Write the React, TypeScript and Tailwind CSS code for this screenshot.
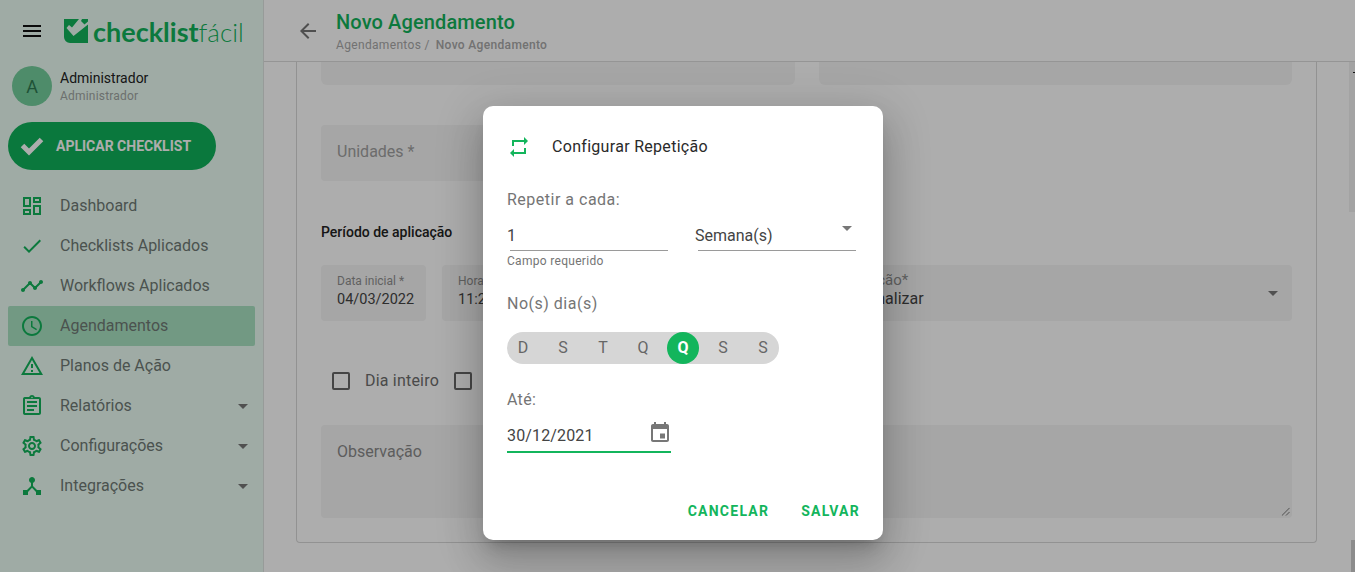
const P = {
  menu: "M3 18h18v-2H3v2zm0-5h18v-2H3v2zm0-7v2h18V6H3z",
  back: "M20 11H7.83l5.59-5.59L12 4l-8 8 8 8 1.41-1.41L7.83 13H20v-2z",
  dashboard: "M19 5v2h-4V5h4M9 5v6H5V5h4m10 8v6h-4v-6h4M9 17v2H5v-2h4M21 3h-8v6h8V3zM11 3H3v10h8V3zm10 8h-8v10h8V11zm-10 4H3v6h8v-6z",
  check: "M9 16.17L4.83 12l-1.42 1.41L9 19 21 7l-1.41-1.41z",
  timeline: "M23 8c0 1.1-.9 2-2 2-.18 0-.35-.02-.51-.07l-3.56 3.55c.05.16.07.34.07.52 0 1.1-.9 2-2 2s-2-.9-2-2c0-.18.02-.36.07-.52l-2.55-2.55c-.16.05-.34.07-.52.07s-.36-.02-.52-.07l-4.55 4.56c.05.16.07.33.07.51 0 1.1-.9 2-2 2s-2-.9-2-2 .9-2 2-2c.18 0 .35.02.51.07l4.56-4.55C8.02 9.36 8 9.18 8 9c0-1.1.9-2 2-2s2 .9 2 2c0 .18-.02.36-.07.52l2.55 2.55c.16-.05.34-.07.52-.07s.36.02.52.07l3.55-3.56C19.02 8.35 19 8.18 19 8c0-1.1.9-2 2-2s2 .9 2 2z",
  schedule: "M11.99 2C6.47 2 2 6.48 2 12s4.47 10 9.99 10C17.52 22 22 17.52 22 12S17.52 2 11.99 2zM12 20c-4.42 0-8-3.58-8-8s3.58-8 8-8 8 3.58 8 8-3.58 8-8 8zm.5-13H11v6l5.25 3.15.75-1.23-4.5-2.67z",
  warning: "M12 5.99L19.53 19H4.47L12 5.99M12 2L1 21h22L12 2zm1 14h-2v2h2v-2zm0-6h-2v4h2v-4z",
  assignment: "M7 15h7v2H7zm0-4h10v2H7zm0-4h10v2H7zm12-4h-4.18C14.4 1.84 13.3 1 12 1c-1.3 0-2.4.84-2.82 2H5c-.14 0-.27.01-.4.04-.39.08-.74.28-1.01.55-.18.18-.33.4-.43.64-.1.23-.16.49-.16.77v14c0 .27.06.54.16.78s.25.45.43.64c.27.27.62.47 1.01.55.13.02.26.03.4.03h14c1.1 0 2-.9 2-2V5c0-1.1-.9-2-2-2zm-7-.25c.41 0 .75.34.75.75s-.34.75-.75.75-.75-.34-.75-.75.34-.75.75-.75zM19 19H5V5h14v14z",
  settings: "M19.43 12.98c.04-.32.07-.64.07-.98 0-.34-.03-.66-.07-.98l2.11-1.65c.19-.15.24-.42.12-.64l-2-3.46c-.09-.16-.26-.25-.44-.25-.06 0-.12.01-.17.03l-2.49 1c-.52-.4-1.08-.73-1.69-.98l-.38-2.65C14.46 2.18 14.25 2 14 2h-4c-.25 0-.46.18-.49.42l-.38 2.65c-.61.25-1.17.59-1.69.98l-2.49-1c-.06-.02-.12-.03-.18-.03-.17 0-.34.09-.43.25l-2 3.46c-.13.22-.07.49.12.64l2.11 1.65c-.04.32-.07.65-.07.98 0 .33.03.66.07.98l-2.11 1.65c-.19.15-.24.42-.12.64l2 3.46c.09.16.26.25.44.25.06 0 .12-.01.17-.03l2.49-1c.52.4 1.08.73 1.69.98l.38 2.65c.03.24.24.42.49.42h4c.25 0 .46-.18.49-.42l.38-2.65c.61-.25 1.17-.59 1.69-.98l2.49 1c.06.02.12.03.18.03.17 0 .34-.09.43-.25l2-3.46c.12-.22.07-.49-.12-.64l-2.11-1.65zm-1.98-1.71c.04.31.05.52.05.73 0 .21-.02.43-.05.73l-.14 1.13.89.7 1.08.84-.7 1.21-1.27-.51-1.04-.42-.9.68c-.43.32-.84.56-1.25.73l-1.06.43-.16 1.13-.2 1.35h-1.4l-.19-1.35-.16-1.13-1.06-.43c-.43-.18-.83-.41-1.23-.71l-.91-.7-1.06.43-1.27.51-.7-1.21 1.08-.84.89-.7-.14-1.13c-.03-.31-.05-.54-.05-.74s.02-.43.05-.73l.14-1.13-.89-.7-1.08-.84.7-1.21 1.27.51 1.04.42.9-.68c.43-.32.84-.56 1.25-.73l1.06-.43.16-1.13.2-1.35h1.39l.19 1.35.16 1.13 1.06.43c.43.18.83.41 1.23.71l.91.7 1.06-.43 1.27-.51.7 1.21-1.07.85-.89.7.14 1.13zM12 8c-2.21 0-4 1.79-4 4s1.79 4 4 4 4-1.79 4-4-1.79-4-4-4zm0 6c-1.1 0-2-.9-2-2s.9-2 2-2 2 .9 2 2-.9 2-2 2z",
  hub: "M17 16l-4-4V8.82C14.16 8.4 15 7.3 15 6c0-1.66-1.34-3-3-3S9 4.34 9 6c0 1.3.84 2.4 2 2.82V12l-4 4H3v5h5v-3.05l4-4.2 4 4.2V21h5v-5h-4z",
  repeat: "M7 7h10v3l4-4-4-4v3H5v6h2V7zm10 10H7v-3l-4 4 4 4v-3h12v-6h-2v4z",
  today: "M19 3h-1V1h-2v2H8V1H6v2H5c-1.11 0-1.99.9-1.99 2L3 19c0 1.1.89 2 2 2h14c1.1 0 2-.9 2-2V5c0-1.1-.9-2-2-2zm0 16H5V8h14v11zm-7-6.5h5v5h-5z",
  drop: "M7 10l5 5 5-5z",
}

function Icon({ d, className }: { d: string; className?: string }) {
  return (
    <svg viewBox="0 0 24 24" fill="currentColor" className={className}>
      <path d={d} />
    </svg>
  )
}

const navItems = [
  { label: "Dashboard", icon: P.dashboard },
  { label: "Checklists Aplicados", icon: P.check },
  { label: "Workflows Aplicados", icon: P.timeline },
  { label: "Agendamentos", icon: P.schedule, active: true },
  { label: "Planos de Ação", icon: P.warning },
  { label: "Relatórios", icon: P.assignment, caret: true },
  { label: "Configurações", icon: P.settings, caret: true },
  { label: "Integrações", icon: P.hub, caret: true },
]

const days = ["D", "S", "T", "Q", "Q", "S", "S"]

function Sidebar() {
  return (
    <aside className="w-[264px] shrink-0 h-full bg-[#ebfdf4] border-r border-[#dfe5e2] flex flex-col">
      <div className="h-[62px] flex items-center pl-[20px]">
        <Icon d={P.menu} className="w-6 h-6 text-[#111]" />
        <svg viewBox="0 0 24 24" className="ml-[20px] w-[24px] h-[24px] text-[#13b35b]">
          <path d="M0 0h15l-7 8.5-3-2.5-2.5 3L9.5 17 24 5.5V24H6a6 6 0 0 1-6-6z" fill="currentColor" />
          <path d="M18 0h6v2.5l-3.5 3L17 2z" fill="currentColor" />
        </svg>
        <span className="ml-[5px] font-['Lato',sans-serif] text-[27px] leading-none font-bold text-[#13b35b]">
          checklist<span className="text-[26px] font-light">fácil</span>
        </span>
      </div>
      <div className="h-[48px] flex items-center pl-[12px]">
        <div className="w-10 h-10 rounded-full bg-[#74ce9c] flex items-center justify-center text-[18px] text-[#2f7a52]">A</div>
        <div className="ml-[8px]">
          <div className="text-[14px] leading-[18px] text-[#222]">Administrador</div>
          <div className="text-[12px] leading-[16px] mt-[1px] text-[#a0a5a2] tracking-[0.2px]">Administrador</div>
        </div>
      </div>
      <div className="pl-[8px] mt-[12px]">
        <div className="w-[208px] h-[48px] rounded-full bg-[#10b15a] flex items-center pl-[12px] text-white">
          <svg viewBox="0 0 24 24" className="w-6 h-6" fill="none" stroke="currentColor" strokeWidth="5">
            <path d="M2.5 11.5L9 18L21.5 5.5" />
          </svg>
          <span className="ml-[12px] text-[14px] font-bold">APLICAR CHECKLIST</span>
        </div>
      </div>
      <nav className="mt-[16px] pl-[8px] pr-[8px]">
        {navItems.map((item) => (
          <div
            key={item.label}
            className={`h-[40px] flex items-center pl-[12px] rounded-[2px] ${item.active ? "bg-[#a9e2c2]" : ""}`}
          >
            <Icon d={item.icon} className="w-6 h-6 text-[#13b35b] shrink-0" />
            <span className="ml-[16px] text-[16px] text-[#6f7a75] grow">{item.label}</span>
            {item.caret && <Icon d={P.drop} className="w-6 h-6 text-[#777]" />}
          </div>
        ))}
      </nav>
    </aside>
  )
}

function Field({ label, value, className }: { label: string; value: string; className?: string }) {
  return (
    <div className={`h-[56px] rounded-[4px] bg-[#f5f5f5] pl-[16px] pt-[9px] overflow-hidden ${className ?? ""}`}>
      <div className="text-[12px] leading-[14px] text-[#8f8f8f]">{label}</div>
      <div className="mt-[2px] text-[14.5px] leading-[20px] text-[#444]">{value}</div>
    </div>
  )
}

function Form() {
  return (
    <div className="relative ml-[32px] mr-[38px] h-[481px] border border-t-0 border-[#d8d8d8] rounded-b-[4px] px-[24px]">
      <div className="flex gap-[24px]">
        <div className="w-[474px] h-[23px] bg-[#f5f5f5] rounded-b-[6px]" />
        <div className="w-[473px] h-[23px] bg-[#f5f5f5] rounded-b-[6px]" />
      </div>
      <div className="mt-[40px] w-[474px] h-[56px] bg-[#f5f5f5] rounded-[4px] pl-[16px] pb-[2px] flex items-center text-[16px] text-[#a0a0a0]">
        Unidades *
      </div>
      <div className="mt-[42px] h-[18px] text-[14px] leading-[18px] font-medium text-[#222]">Período de aplicação</div>
      <div className="mt-[24px] flex gap-[16px]">
        <Field label="Data inicial *" value="04/03/2022" className="w-[105px]" />
        <Field label="Hora inicial" value="11:20" className="w-[105px]" />
        <div className="relative grow h-[56px] rounded-[4px] bg-[#f5f5f5] pl-[272px] pt-[8px]">
          <div className="text-[15px] leading-[14px] text-[#8f8f8f]">Repetição*</div>
          <div className="mt-[1px] text-[16px] leading-[22px] text-[#444]">Personalizar</div>
          <Icon d={P.drop} className="absolute right-[7px] top-[16px] w-6 h-6 text-[#777]" />
        </div>
      </div>
      <div className="mt-[50px] h-[20px] flex items-center pl-[11px] text-[16px] text-[#6d6d6d]">
        <span className="w-[18px] h-[18px] border-2 border-[#666] rounded-[2px]" />
        <span className="ml-[15px] tracking-[0.2px]">Dia inteiro</span>
        <span className="ml-[15px] w-[18px] h-[18px] border-2 border-[#666] rounded-[2px]" />
      </div>
      <div className="relative mt-[34px] h-[93px] bg-[#f5f5f5] rounded-[4px] pl-[16px] pt-[16px] text-[16px] leading-[22px] text-[#8a8a8a]">
        Observação
        <svg viewBox="0 0 10 10" className="absolute right-[2px] bottom-[2px] w-[9px] h-[9px] text-[#444]">
          <path d="M1 9.5L9.5 1M5.5 9.5L9.5 5.5" stroke="currentColor" strokeWidth="0.8" fill="none" />
        </svg>
      </div>
    </div>
  )
}

function Dialog() {
  return (
    <div className="absolute left-[483px] top-[106px] w-[400px] h-[434px] rounded-[10px] bg-white px-[24px] shadow-[0_11px_15px_-7px_rgba(0,0,0,0.2),0_24px_38px_3px_rgba(0,0,0,0.14),0_9px_46px_8px_rgba(0,0,0,0.12)]">
      <div className="h-[81px] flex items-center">
        <Icon d={P.repeat} className="w-6 h-6 text-[#13b55c]" />
        <span className="ml-[21px] text-[16px] text-[#2a2a2a] tracking-[0.3px]">Configurar Repetição</span>
      </div>
      <div className="h-[26px] flex items-center text-[16px] text-[#757575] tracking-[0.5px]">Repetir a cada:</div>
      <div className="mt-[9px] flex">
        <div className="w-[161px]">
          <div className="h-[28px] flex items-center text-[16px] text-[#444]">1</div>
          <div className="ml-[3px] h-px bg-[#9a9a9a]" />
        </div>
        <div className="relative ml-[27px] w-[161px]">
          <div className="h-[28px] flex items-center text-[16px] text-[#444]">Semana(s)</div>
          <div className="ml-[3px] h-px bg-[#9a9a9a]" />
          <Icon d={P.drop} className="absolute -right-[3px] -top-[6px] w-6 h-6 text-[#777]" />
        </div>
      </div>
      <div className="mt-[3px] h-[14px] text-[12px] leading-[14px] text-[#757575] tracking-[0.3px]">Campo requerido</div>
      <div className="mt-[23px] h-[26px] flex items-center text-[16px] text-[#757575] tracking-[0.5px]">No(s) dia(s)</div>
      <div className="mt-[15px] w-[272px] h-[32px] rounded-full bg-[#d6d6d6] flex gap-[8px]">
        {days.map((d, i) => (
          <div
            key={i}
            className={`w-[32px] h-[32px] rounded-full flex items-center justify-center text-[16px] ${
              i === 4 ? "bg-[#13b55c] text-white font-bold" : "text-[#666]"
            }`}
          >
            {d}
          </div>
        ))}
      </div>
      <div className="mt-[23px] h-[26px] flex items-center text-[16px] text-[#757575] tracking-[0.3px]">Até:</div>
      <div className="mt-[8px] w-[164px] h-[32px] border-b-2 border-[#13b55c] flex items-center relative text-[16px] text-[#444] tracking-[0.15px]">
        30/12/2021
        <Icon d={P.today} className="absolute right-[-1px] top-0 w-6 h-6 text-[#777]" />
      </div>
      <div className="mt-[48px] -mr-[1px] flex justify-end text-[14px] font-bold text-[#13b55c] tracking-[1.25px]">
        <span>CANCELAR</span>
        <span className="ml-[32px]">SALVAR</span>
      </div>
    </div>
  )
}

export default function App() {
  return (
    <div className="relative w-[1355px] h-[572px] overflow-hidden bg-white font-['Roboto',sans-serif]">
      <div className="flex h-full">
        <Sidebar />
        <main className="flex-1 min-w-0 flex flex-col relative">
          <header className="h-[62px] shrink-0 border-b border-[#dcdcdc] flex items-center pl-[32px]">
            <Icon d={P.back} className="w-6 h-6 text-[#757575]" />
            <div className="ml-[16px] mt-[2px]">
              <div className="text-[20px] leading-[26px] font-medium text-[#13b35b] tracking-[0.12px]">Novo Agendamento</div>
              <div className="mt-[1px] text-[12px] leading-[18px] text-[#a8a8a8] tracking-[0.33px]">
                Agendamentos /<span className="ml-[6px] font-medium">Novo Agendamento</span>
              </div>
            </div>
          </header>
          <Form />
          <div className="absolute right-0 top-[62px] w-[6px] h-[150px] bg-[#f0f0f0]" />
          <div className="absolute right-0 top-[72px] w-[2px] h-px bg-[#222]" />
          <div className="absolute right-0 bottom-0 w-[4px] h-[32px] bg-[#cecece]" />
        </main>
      </div>
      <div className="absolute inset-0 bg-black/[0.32]" />
      <Dialog />
    </div>
  )
}
